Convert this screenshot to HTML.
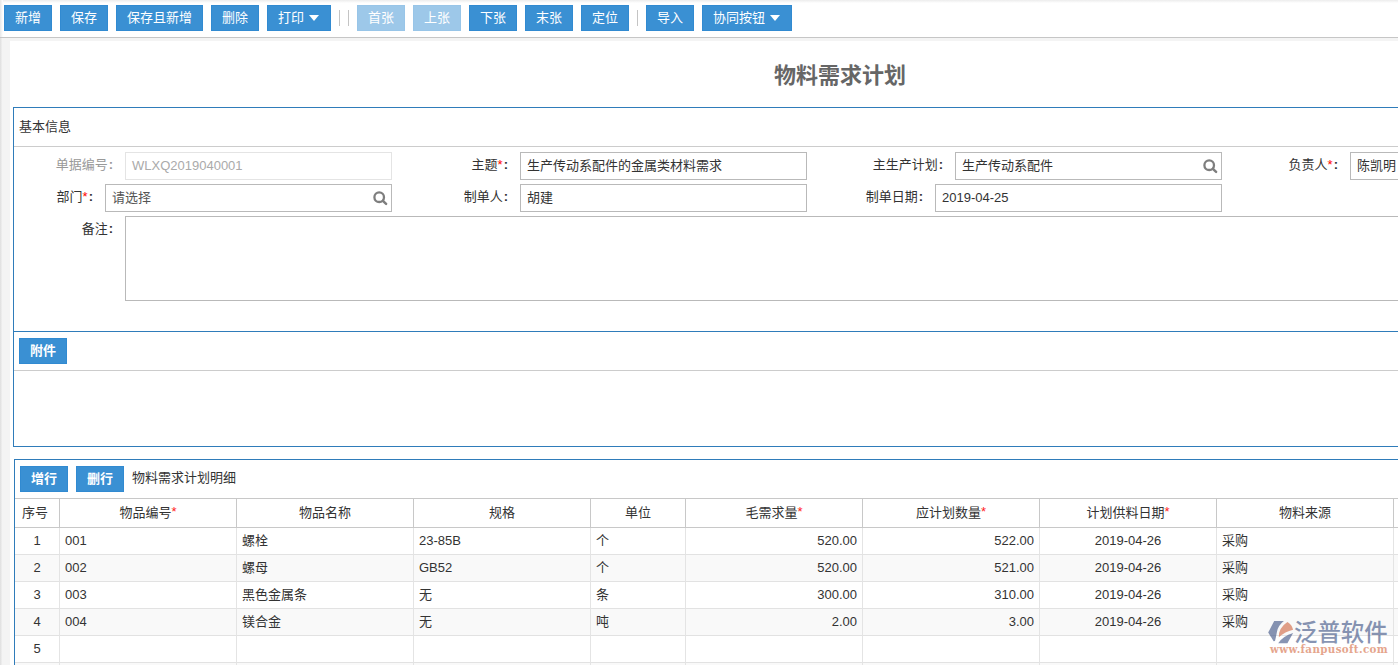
<!DOCTYPE html>
<html lang="zh-CN">
<head>
<meta charset="utf-8">
<title>物料需求计划</title>
<style>
*{box-sizing:border-box;margin:0;padding:0}
html,body{width:1398px;height:665px;overflow:hidden}
body{position:relative;background:#f4f4f4;color:#333;font-family:"Liberation Sans","Noto Sans CJK SC",sans-serif;font-size:13px;line-height:1}
.abs{position:absolute}
/* toolbar */
#toolbar{position:absolute;left:0;top:0;width:1398px;height:38px;background:linear-gradient(#ececec,#fff 3px);border-bottom:1px solid #c6c6c6}
#edge{position:absolute;left:0;top:38px;width:2px;height:627px;background:linear-gradient(90deg,#dedede,#f0f0f0)}
#edge2{position:absolute;left:0;top:0;width:3px;height:37px;background:linear-gradient(90deg,#e6e6e6,#fff)}
.btn{position:absolute;top:5px;height:26px;line-height:23px;background:#3a90d3;border:1px solid #318ad1;color:#fff;font-size:13px;text-align:center;white-space:nowrap;padding:0 10px}
.btn.dis{background:#9dc8e9;border-color:#98c5e8;color:#fff}
.btn .tri{display:inline-block;width:0;height:0;border-left:5px solid transparent;border-right:5px solid transparent;border-top:6px solid #fff;margin-left:5px;vertical-align:middle;position:relative;top:-1px}
.sep{position:absolute;top:10px;width:1px;height:16px;background:#c4c4c4}
/* page */
#page{position:absolute;left:10px;top:41px;width:1660px;height:700px;background:#fff}
#title{position:absolute;left:0;top:21px;width:1660px;text-align:center;font-size:22px;line-height:28px;font-weight:bold;color:#666}
.sec{position:absolute;border:1px solid #2f7cba;background:#fff}
.hl{position:absolute;height:1px;background:#ccc}
.lbl{position:absolute;height:28px;line-height:26px;text-align:right;white-space:nowrap;color:#333}
.lbl i{font-style:normal;color:#f00}
.lbl b{font-weight:bold;margin-left:1px;margin-right:-1px}
.lbl i+b{margin-left:1px}
.inp{position:absolute;height:28px;line-height:26px;border:1px solid #b9b9b9;background:#fff;padding-left:6px;white-space:nowrap;color:#333;overflow:hidden}
.inp.dis{border-color:#e4e4e4;color:#aaa}
.mag{position:absolute;right:2px;top:5px;width:17px;height:17px}
.sbtn{position:absolute;height:26px;line-height:23px;width:48px;background:#3a90d3;border:1px solid #318ad1;color:#fff;text-align:center;font-weight:bold}
/* table */
#grid{position:absolute;left:0;top:38px;border-collapse:separate;border-spacing:0;table-layout:fixed;width:1600px}
#grid th,#grid td{height:27px;border-right:1px solid #e4e4e4;border-bottom:1px solid #e2e2e2;font-weight:normal;font-size:13px;padding:0 5px;white-space:nowrap;overflow:hidden;color:#333;line-height:24px}
#grid th{height:30px;border-top:1px solid #c8c8c8;border-bottom:1px solid #c8c8c8;border-right:1px solid #c8c8c8;text-align:center;line-height:23px;padding-bottom:2px}
#grid th i{font-style:normal;color:#f22;position:relative;top:-1px}
#grid tr.alt td{background:#f9f9f9}
#grid td.c{text-align:center}
#grid td.r{text-align:right}
#grid td.l{text-align:left}
</style>
</head>
<body>
<div id="toolbar">
  <div class="btn" style="left:4px;width:48px">新增</div>
  <div class="btn" style="left:60px;width:48px">保存</div>
  <div class="btn" style="left:116px;width:87px">保存且新增</div>
  <div class="btn" style="left:211px;width:48px">删除</div>
  <div class="btn" style="left:267px;width:64px;padding-right:12px">打印<span class="tri"></span></div>
  <div class="sep" style="left:339px"></div>
  <div class="sep" style="left:348px"></div>
  <div class="btn dis" style="left:357px;width:48px">首张</div>
  <div class="btn dis" style="left:413px;width:48px">上张</div>
  <div class="btn" style="left:469px;width:48px">下张</div>
  <div class="btn" style="left:525px;width:48px">末张</div>
  <div class="btn" style="left:581px;width:48px">定位</div>
  <div class="sep" style="left:637px"></div>
  <div class="btn" style="left:646px;width:48px">导入</div>
  <div class="btn" style="left:702px;width:90px;padding-right:12px">协同按钮<span class="tri"></span></div>
</div>

<div id="page">
  <div id="title">物料需求计划</div>

  <!-- section 1 : page-left is 10, so local x = abs - 10, local y = abs - 41 -->
  <div class="sec" id="s1" style="left:3px;top:66px;width:1654px;height:340px">
    <!-- local origin inside border: abs (14,108) -->
    <div class="abs" style="left:5px;top:11px;line-height:16px">基本信息</div>
    <div class="hl" style="left:0;top:38px;width:1652px"></div>

    <div class="lbl" style="left:0;top:44px;width:98px;color:#999">单据编号<b>:</b></div>
    <div class="inp dis" style="left:111px;top:44px;width:267px">WLXQ2019040001</div>

    <div class="lbl" style="left:380px;top:44px;width:113px">主题<i>*</i><b>:</b></div>
    <div class="inp" style="left:506px;top:44px;width:287px">生产传动系配件的金属类材料需求</div>

    <div class="lbl" style="left:800px;top:44px;width:128px">主生产计划<b>:</b></div>
    <div class="inp" style="left:941px;top:44px;width:267px">生产传动系配件
      <svg class="mag" viewBox="0 0 17 17"><circle cx="7.2" cy="7.2" r="4.8" fill="none" stroke="#7e7e7e" stroke-width="2.3"/><path d="M10.9 10.8 L14.1 13.8" stroke="#7e7e7e" stroke-width="2.5" stroke-linecap="round"/></svg>
    </div>

    <div class="lbl" style="left:1220px;top:44px;width:103px">负责人<i>*</i><b>:</b></div>
    <div class="inp" style="left:1336px;top:44px;width:267px">陈凯明</div>

    <div class="lbl" style="left:0;top:76px;width:78px">部门<i>*</i><b>:</b></div>
    <div class="inp" style="left:91px;top:76px;width:287px;color:#555">请选择
      <svg class="mag" viewBox="0 0 17 17"><circle cx="7.2" cy="7.2" r="4.8" fill="none" stroke="#7e7e7e" stroke-width="2.3"/><path d="M10.9 10.8 L14.1 13.8" stroke="#7e7e7e" stroke-width="2.5" stroke-linecap="round"/></svg>
    </div>

    <div class="lbl" style="left:380px;top:76px;width:113px">制单人<b>:</b></div>
    <div class="inp" style="left:506px;top:76px;width:287px">胡建</div>

    <div class="lbl" style="left:800px;top:76px;width:108px">制单日期<b>:</b></div>
    <div class="inp" style="left:921px;top:76px;width:287px">2019-04-25</div>

    <div class="lbl" style="left:0;top:108px;width:98px">备注<b>:</b></div>
    <div class="inp" style="left:111px;top:108px;width:1500px;height:85px"></div>

    <div class="abs" style="left:0;top:223px;width:1652px;height:1px;background:#2f7cba"></div>
    <div class="sbtn" style="left:5px;top:230px">附件</div>
    <div class="hl" style="left:0;top:262px;width:1652px"></div>
  </div>

  <!-- section 2 -->
  <div class="sec" id="s2" style="left:4px;top:418px;width:1653px;height:300px">
    <!-- local origin inside border: abs (15,460) -->
    <div class="sbtn" style="left:5px;top:6px">增行</div>
    <div class="sbtn" style="left:61px;top:6px">删行</div>
    <div class="abs" style="left:117px;top:10px;line-height:16px">物料需求计划明细</div>

    <table id="grid">
      <colgroup><col style="width:45px"><col style="width:177px"><col style="width:177px"><col style="width:177px"><col style="width:95px"><col style="width:177px"><col style="width:177px"><col style="width:177px"><col style="width:177px"><col style="width:177px"><col></colgroup>
      <tr><th style="padding-right:9px">序号</th><th>物品编号<i>*</i></th><th>物品名称</th><th>规格</th><th>单位</th><th>毛需求量<i>*</i></th><th>应计划数量<i>*</i></th><th>计划供料日期<i>*</i></th><th>物料来源</th><th>备注</th><th></th></tr>
      <tr><td class="c">1</td><td>001</td><td>螺栓</td><td>23-85B</td><td>个</td><td class="r">520.00</td><td class="r">522.00</td><td class="c">2019-04-26</td><td>采购</td><td></td><td></td></tr>
      <tr class="alt"><td class="c">2</td><td>002</td><td>螺母</td><td>GB52</td><td>个</td><td class="r">520.00</td><td class="r">521.00</td><td class="c">2019-04-26</td><td>采购</td><td></td><td></td></tr>
      <tr><td class="c">3</td><td>003</td><td>黑色金属条</td><td>无</td><td>条</td><td class="r">300.00</td><td class="r">310.00</td><td class="c">2019-04-26</td><td>采购</td><td></td><td></td></tr>
      <tr class="alt"><td class="c">4</td><td>004</td><td>镁合金</td><td>无</td><td>吨</td><td class="r">2.00</td><td class="r">3.00</td><td class="c">2019-04-26</td><td>采购</td><td></td><td></td></tr>
      <tr><td class="c">5</td><td></td><td></td><td></td><td></td><td></td><td></td><td></td><td></td><td></td><td></td></tr>
      <tr class="alt"><td class="c">6</td><td></td><td></td><td></td><td></td><td></td><td></td><td></td><td></td><td></td><td></td></tr>
    </table>
  </div>
</div>

<!-- watermark -->
<div id="wm" class="abs" style="left:1266px;top:619px;width:130px;height:42px;opacity:.66">
  <svg class="abs" style="left:0;top:0" width="30" height="27" viewBox="0 0 30 27">
    <path d="M8.2 2 L17.9 2 Q12 6.5 10.9 12.9 Q10 18 9 22 L7.6 22.3 L2.2 13.4 Z" fill="#4a5d8c"/>
    <path d="M21.4 3.1 Q26 6 27.1 10.7 Q19 12.5 12.8 18.3 Q12.5 9 21.4 3.1 Z" fill="#d4704d"/>
    <path d="M27.1 14 L21.4 24.2 L12.2 24.2 Q17 17 27.1 14 Z" fill="#4a5d8c"/>
  </svg>
  <div class="abs" style="left:28px;top:1px;font-size:23.4px;line-height:26px;font-weight:500;color:#4a5d8c;white-space:nowrap">泛普软件</div>
  <div class="abs" style="left:4px;top:24px;font-family:'DejaVu Serif','Liberation Serif',serif;font-weight:bold;font-size:10.3px;line-height:13px;color:#d87752;letter-spacing:.36px;white-space:nowrap">www.fanpusoft.com</div>
</div>
<div id="edge"></div><div id="edge2"></div>
</body>
</html>
